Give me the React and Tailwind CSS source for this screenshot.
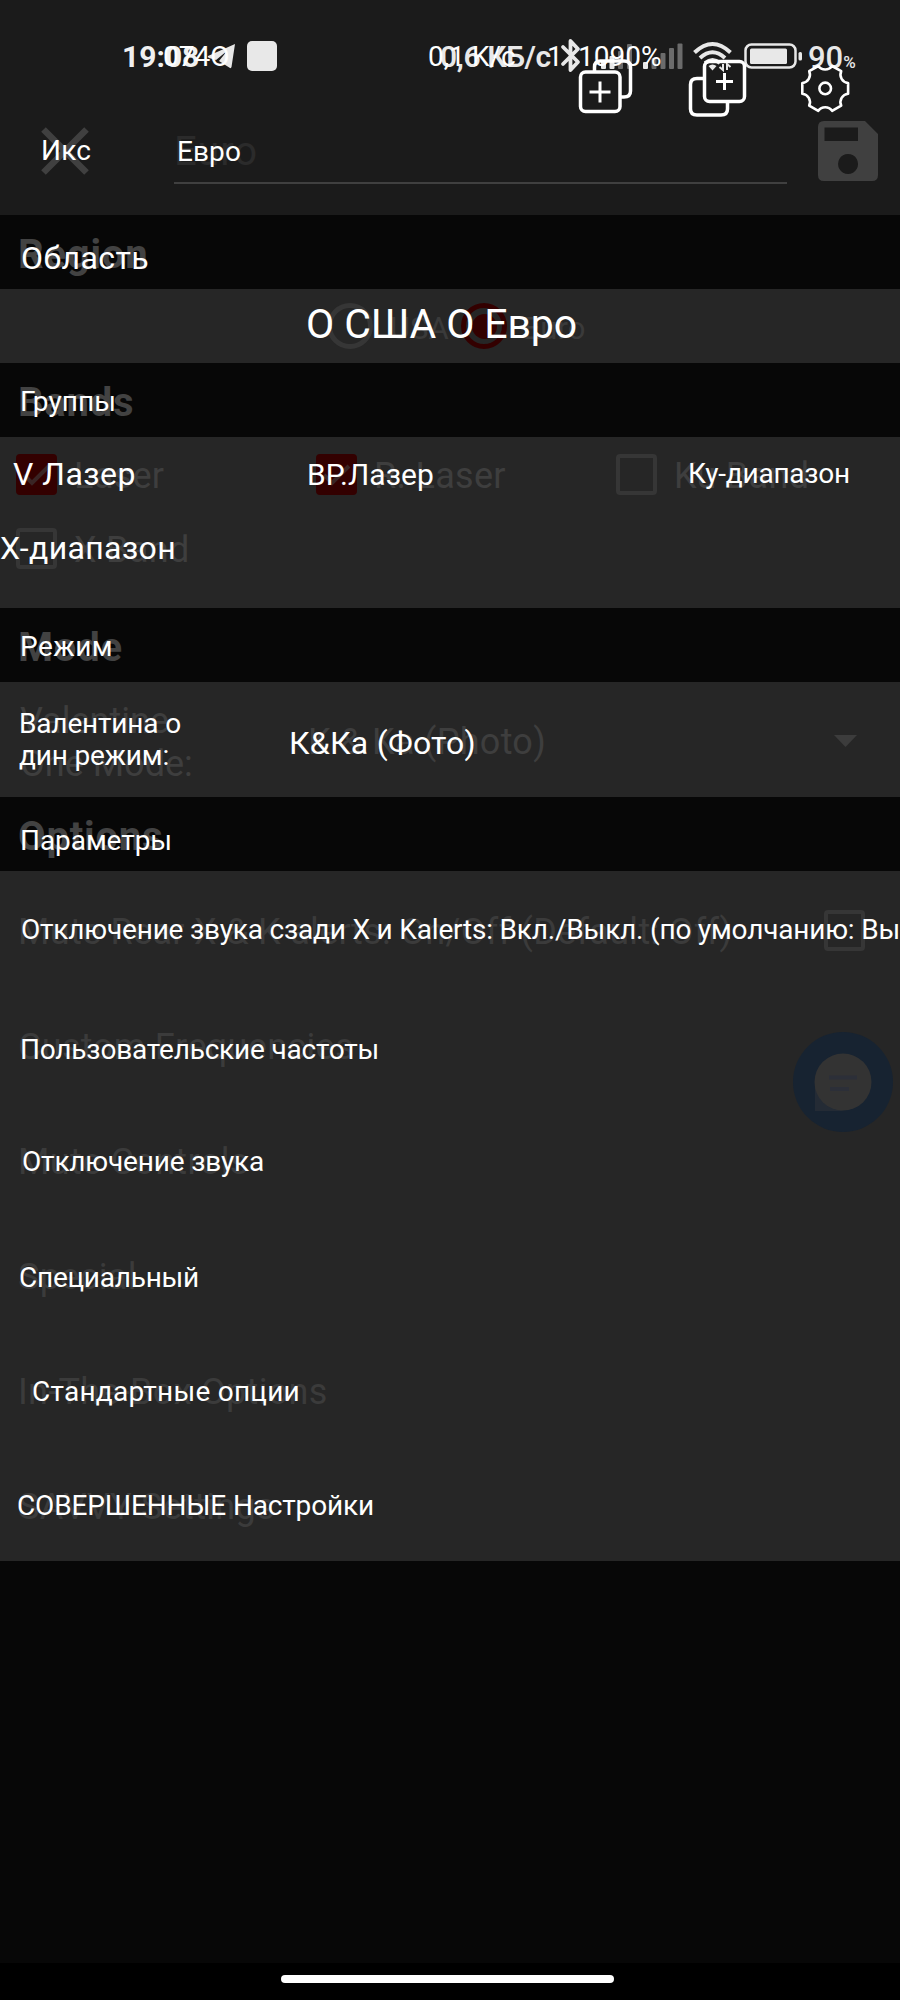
import { useLayoutEffect, useRef, useState } from "react";

const bands = [
  { label: "Laser", checked: true },
  { label: "R. Laser", checked: true },
  { label: "Ku Band", checked: false },
  { label: "X Band", checked: false }
];

const options = [
  { label: "Mute Rear X & K alerts: On/Off (Default: Off)", checkbox: true },
  { label: "Custom Frequencies" },
  { label: "Mute Controls" },
  { label: "Special" },
  { label: "In-The-Box Options" },
  { label: "SAVVY Settings" }
];

// translated captions float above the dimmed screen, each one fitted to its box
const captions = [
  { text: "Икс", width: 50, place: "left-[41px] top-[137px] text-[28px]" },
  { text: "Евро", width: 64, place: "left-[177px] top-[138px] text-[28px]" },
  { text: "Область", width: 128, place: "left-[21px] top-[242px] text-[32px]" },
  { text: "О США О Евро", width: 271, place: "left-[306px] top-[304px] text-[41px]" },
  { text: "Группы", width: 96, place: "left-[20px] top-[388px] text-[28px]" },
  { text: "V Лазер", width: 123, place: "left-[13px] top-[458px] text-[32px]" },
  { text: "ВР.Лазер", width: 127, place: "left-[307px] top-[460px] text-[30px]" },
  { text: "Ку-диапазон", width: 162, place: "left-[688px] top-[460px] text-[28px]" },
  { text: "Х-диапазон", width: 176, place: "left-[0px] top-[532px] text-[32px]" },
  { text: "Режим", width: 93, place: "left-[20px] top-[633px] text-[28px]" },
  { text: "Валентина о", width: 162, place: "left-[19px] top-[710px] text-[28px]" },
  { text: "дин режим:", width: 150, place: "left-[19px] top-[742px] text-[28px]" },
  { text: "К&Ка (Фото)", width: 187, place: "left-[289px] top-[727px] text-[32px]" },
  { text: "Параметры", width: 152, place: "left-[20px] top-[827px] text-[28px]" },
  {
    text: "Отключение звука сзади X и Kalerts: Вкл./Выкл. (по умолчанию: Вы",
    width: 879,
    place: "left-[21px] top-[916px] text-[28px]"
  },
  { text: "Пользовательские частоты", width: 359, place: "left-[20px] top-[1036px] text-[28px]" },
  { text: "Отключение звука", width: 242, place: "left-[22px] top-[1148px] text-[28px]" },
  { text: "Специальный", width: 180, place: "left-[19px] top-[1264px] text-[28px]" },
  { text: "Стандартные опции", width: 268, place: "left-[32px] top-[1378px] text-[28px]" },
  { text: "СОВЕРШЕННЫЕ Настройки", width: 357, place: "left-[17px] top-[1492px] text-[28px]" }
];

function Caption({ text, width, place }) {
  const ref = useRef(null);
  const [spacing, setSpacing] = useState(0);

  useLayoutEffect(() => {
    const natural = ref.current.getBoundingClientRect().width;
    setSpacing((width - natural) / text.length);
  }, [text, width]);

  return (
    <span
      ref={ref}
      style={{ letterSpacing: `${spacing}px` }}
      className={`absolute whitespace-pre leading-none text-white ${place}`}
    >
      {text}
    </span>
  );
}

function StatusIcons() {
  return (
    <svg className="h-[38px] w-[246px] shrink-0" viewBox="560 37 246 38" fill="none">
      <path d="M563 47 L578 62 L570.5 70 V41 L578 49 L563 64" stroke="#e8e8e8" strokeWidth="3.8" strokeLinejoin="round" strokeLinecap="round" />
      <g fill="#e8e8e8">
        <rect x="601" y="61" width="5" height="8" rx="1" />
        <rect x="609.5" y="56" width="5" height="13" rx="1" />
        <rect x="643" y="62" width="5" height="7" rx="1" />
      </g>
      <g fill="#6b6b6b">
        <rect x="618" y="51" width="5" height="18" rx="1" />
        <rect x="627" y="44" width="5" height="25" rx="1" />
        <rect x="651.5" y="58" width="5" height="11" rx="1" />
        <rect x="660.5" y="53" width="5" height="16" rx="1" />
        <rect x="669" y="48" width="5" height="21" rx="1" />
        <rect x="677.5" y="43.500" width="5" height="25.500" rx="1" />
      </g>
      <g stroke="#e8e8e8" strokeWidth="4">
        <path d="M694.500 52.500 Q712.500 35.500 730.500 52.500" />
        <path d="M700 58 Q712.500 46.500 725 58" />
        <path d="M705 63 Q712.500 57 720 63" />
      </g>
      <path d="M708.500 66 Q712.500 63 716.500 66 L712.500 70.500Z" fill="#e8e8e8" />
      <path d="M723 64 V70 L719.500 67 M727 70 V64 L730.500 67" stroke="#e8e8e8" strokeWidth="2" />
      <rect x="745.500" y="44.500" width="50" height="23" rx="6" stroke="#e8e8e8" strokeWidth="2.500" />
      <rect x="750" y="48.500" width="37" height="15.500" rx="1.500" fill="#e8e8e8" />
      <rect x="798.500" y="52" width="3.500" height="8.500" rx="1.500" fill="#e8e8e8" />
    </svg>
  );
}

function ToolIcons() {
  return (
    <svg className="absolute left-[570px] top-[55px] h-[65px] w-[290px]" viewBox="570 55 290 65" fill="none" stroke="#fff" strokeWidth="3.500">
      <path d="M594.500 71 V67 Q594.500 61 600.500 61 H624 Q630.500 61 630.500 67 V91 Q630.500 97 624 97 H621" />
      <rect x="580.500" y="72" width="39.500" height="39.500" rx="5" fill="#1b1b1b" />
      <path d="M600 81.500 V102.500 M589.500 92 H610.500" strokeWidth="3" />
      <path d="M704 78.500 H697 Q690.500 78.500 690.500 84.500 V109 Q690.500 115 697 115 H721 Q727.500 115 727.500 109 V102" />
      <rect x="704.500" y="61.500" width="40" height="40" rx="5" />
      <path d="M724.500 73 V90 M716 81.500 H733" strokeWidth="3" />
      <g transform="translate(825.2 88.400)" strokeWidth="2.600">
        <path
          strokeLinejoin="round"
          d="M22.900 -5.300 V5.300 A8.500 8.500 0 0 0 16 17.200 L6.900 22.400 A8.500 8.500 0 0 0 -6.900 22.400 L-16 17.200 A8.500 8.500 0 0 0 -22.900 5.300 V-5.300 A8.500 8.500 0 0 0 -16 -17.200 L-6.900 -22.400 A8.500 8.500 0 0 0 6.900 -22.400 L16 -17.200 A8.500 8.500 0 0 0 22.900 -5.300Z"
        />
        <circle r="5.800" />
      </g>
    </svg>
  );
}

function Header() {
  return (
    <header className="relative h-[215px] bg-[#1b1b1b]">
      <div className="flex h-[112px] items-center text-[#e8e8e8]">
        <span className="ml-[122px] w-[85px] whitespace-nowrap pt-[2px] text-[30px] font-bold leading-none text-[#f0f0f0]">
          19:08
        </span>
        <svg className="h-[26px] w-[28px] shrink-0" viewBox="0 0 28 26">
          <path d="M28 1 L1 13 Q0 14 2 15 L9 17 L20 8 L12 18 L23 25 Q24 25.500 24.500 24Z" fill="#e8e8e8" />
        </svg>
        <span className="ml-3 size-[30px] shrink-0 rounded-[5px] bg-[#e8e8e8]" />
        <span className="ml-[163px] w-[120px] shrink-0 whitespace-nowrap pt-[2px] text-[30px] font-semibold leading-none tracking-[-0.4px]">
          0,6 КБ/с
        </span>
        <StatusIcons />
        <span className="ml-0.5 flex items-baseline pt-[2px] font-medium leading-none">
          <span className="text-[31px] leading-none">90</span>
          <span className="text-[17px] leading-none">%</span>
        </span>
      </div>
      <div className="absolute left-[163px] top-[43px] text-[28px] leading-none text-white">074O</div>
      <div className="absolute left-[428px] top-[43px] text-[28px] leading-none text-white">0,1 K/c</div>
      <div className="absolute left-[547px] top-[43px] text-[28px] leading-none text-white">1</div>
      <div className="absolute left-[578px] top-[43px] text-[28px] leading-none text-white">1090%</div>
      <ToolIcons />

      <div className="flex items-start pl-[41px]">
        <svg className="mt-[15px] size-[48px]" viewBox="0 0 48 48" stroke="#404040" strokeWidth="6.500">
          <path d="M2.500 2.500 L45.500 45.500 M45.500 2.500 L2.500 45.500" />
        </svg>
        <div className="ml-[85px] h-[72px] w-[613px] border-b-[2.5px] border-[#404040] pt-5 text-[40px] leading-none tracking-[0.9px] text-[#2b2b2b]">
          Euro
        </div>
        <svg className="ml-[31px] mt-[9px] size-[60px]" viewBox="0 0 60 60">
          <path
            fill="#404040"
            fillRule="evenodd"
            d="M6 0 H47 L60 13 V54 Q60 60 54 60 H6 Q0 60 0 54 V6 Q0 0 6 0Z M6.500 6.500 V20 H40 V6.500Z M30 33 A10 10 0 1 0 30.100 33Z"
          />
        </svg>
      </div>
    </header>
  );
}

function SectionTitle({ children }) {
  return (
    <h2 className="flex h-[74px] items-center bg-[#070707] pl-[18px] pt-[5px] text-[40px] font-bold leading-none tracking-[0.8px] text-[#424242]">
      {children}
    </h2>
  );
}

function CheckBox({ checked }) {
  if (checked) {
    return (
      <span className="size-[41px] shrink-0 rounded-[4px] bg-[#330000]">
        <svg viewBox="0 0 41 41" fill="none" stroke="#3a2525" strokeWidth="4">
          <path d="M8 21 L16 29 L33 12" />
        </svg>
      </span>
    );
  }
  return <span className="size-[41px] shrink-0 rounded-[4px] border-4 border-[#363636]" />;
}

function Radio({ checked }) {
  return (
    <span
      className={`flex size-[46px] items-center justify-center rounded-full border-[5px] ${
        checked ? "border-[#330000]" : "border-[#363636]"
      }`}
    >
      {checked ? <span className="size-[25px] rounded-full bg-[#330000]" /> : null}
    </span>
  );
}

function ChatButton() {
  return (
    <svg className="absolute left-[793px] top-[1032px] size-[100px]" viewBox="0 0 100 100">
      <circle cx="50" cy="50" r="50" fill="#172331" />
      <path d="M22 50 V79 H50Z" fill="#242b35" />
      <circle cx="50" cy="50" r="28.500" fill="#333" />
      <path d="M36 45.500 H64 M37 57 H56" stroke="#2c2f38" strokeWidth="4" />
    </svg>
  );
}

function App() {
  return (
    <div className="relative flex h-[2000px] w-[900px] flex-col overflow-hidden bg-[#070707] font-[Roboto,sans-serif]">
      <Header />

      <SectionTitle>Region</SectionTitle>
      <div className="flex h-[74px] items-center bg-[#262626] pl-[327px] text-[31px] leading-none text-[#3a3a3a]">
        <Radio />
        <span className="ml-[17px] w-[71px] pt-1">USA</span>
        <Radio checked />
        <span className="ml-[16px] pt-1">Euro</span>
      </div>

      <SectionTitle>Bands</SectionTitle>
      <div className="grid h-[171px] grid-cols-3 content-start bg-[#262626] text-[36px] leading-none tracking-[0.3px] text-[#3e3e3e]">
        {bands.map((band) => (
          <div key={band.label} className="flex h-[74px] items-center pl-4">
            <CheckBox checked={band.checked} />
            <span className="ml-[17px] pt-[3px]">{band.label}</span>
          </div>
        ))}
      </div>

      <SectionTitle>Mode</SectionTitle>
      <div className="flex h-[115px] items-center bg-[#262626] pl-5 text-[36px] text-[#3e3e3e]">
        <p className="w-[288px] pt-[6px] leading-[43px]">
          Valentine
          <br />
          One Mode:
        </p>
        <span className="w-[526px] pt-[5px] leading-none tracking-[0.3px]">K &amp; Ka (Photo)</span>
        <svg className="mt-[3px] h-[12px] w-[23px]" viewBox="0 0 23 12">
          <path d="M0 0 H23 L11.500 12Z" fill="#3c3c3c" />
        </svg>
      </div>

      <SectionTitle>Options</SectionTitle>
      <div className="bg-[#262626] text-[36px] leading-none tracking-[0.3px] text-[#3b3b3b] [font-kerning:none]">
        {options.map((option) => (
          <div key={option.label} className="flex h-[115px] items-center justify-between pl-[18px] pr-[35px] pt-1">
            <span className="pt-0.5">{option.label}</span>
            {option.checkbox ? <CheckBox /> : null}
          </div>
        ))}
      </div>

      <footer className="mt-auto flex h-[37px] justify-center bg-black pt-[12px]">
        <span className="mr-[5px] h-[8px] w-[333px] rounded-full bg-white" />
      </footer>

      <ChatButton />
      {captions.map((caption) => (
        <Caption key={caption.place} {...caption} />
      ))}
    </div>
  );
}

export default App;
